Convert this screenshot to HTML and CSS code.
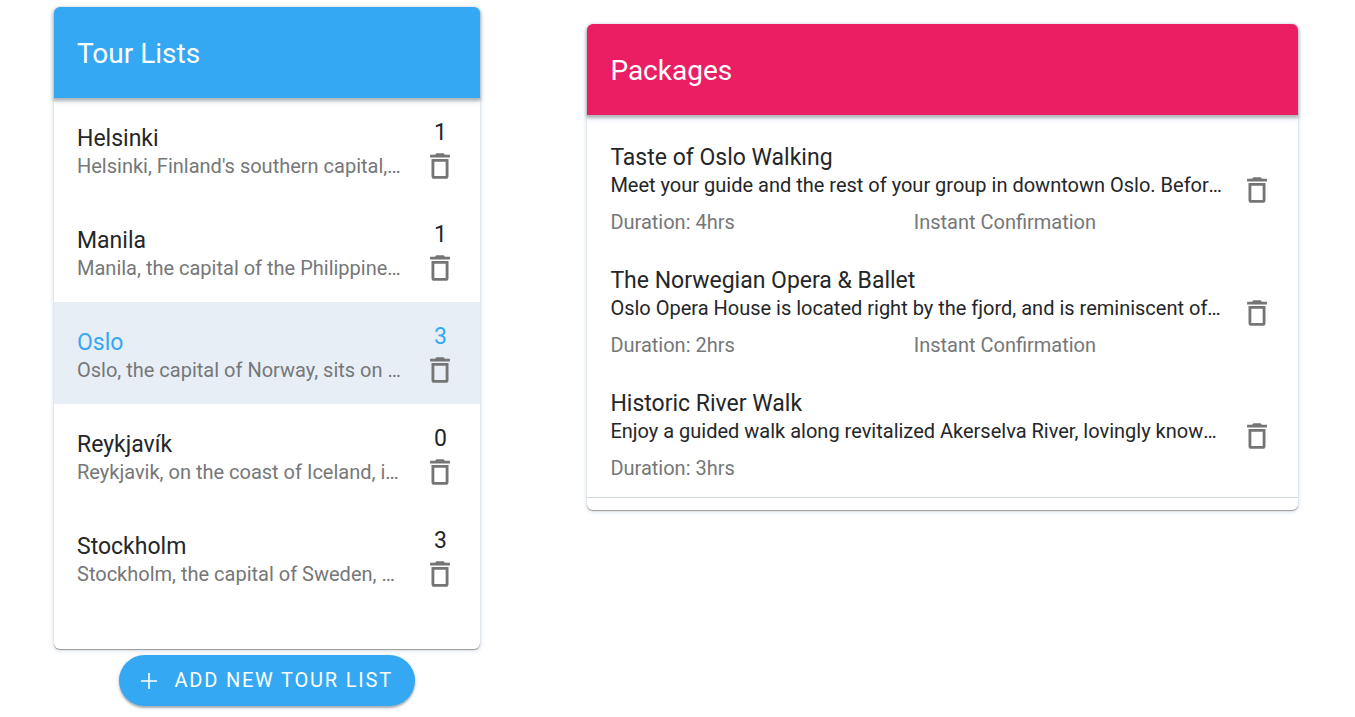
FILE: index.html
```html
<!DOCTYPE html>
<html lang="en">
<head>
<meta charset="utf-8">
<meta name="viewport" content="width=device-width, initial-scale=1">
<title>Tour Lists</title>
<link rel="stylesheet" href="styles.css">
</head>
<body>
<svg class="sprite" aria-hidden="true">
  <symbol id="trash" viewBox="0 0 24 24"><path d="M6 19a2 2 0 0 0 2 2h8a2 2 0 0 0 2-2V7H6v12M8 9h8v10H8V9m7.500-5-1-1h-5l-1 1H5v2h14V4h-3.500z"/></symbol>
</svg>
<main class="page">
  <section class="column">
    <div class="card lists">
      <header class="card-header blue"><h1 class="heading">Tour Lists</h1></header>
      <ul class="list">
        <li class="tour">
          <div class="text"><h2 class="title">Helsinki</h2><p class="line muted">Helsinki, Finland's southern capital, sits on a peninsula</p></div>
          <div class="action"><span class="count">1</span><button class="delete" type="button" aria-label="Delete Helsinki"><svg class="icon"><use href="#trash"/></svg></button></div>
        </li>
        <li class="tour">
          <div class="text"><h2 class="title">Manila</h2><p class="line muted">Manila, the capital of the Philippines, is a bayside city</p></div>
          <div class="action"><span class="count">1</span><button class="delete" type="button" aria-label="Delete Manila"><svg class="icon"><use href="#trash"/></svg></button></div>
        </li>
        <li class="tour active">
          <div class="text"><h2 class="title">Oslo</h2><p class="line muted">Oslo, the capital of Norway, sits on the southern coast</p></div>
          <div class="action"><span class="count">3</span><button class="delete" type="button" aria-label="Delete Oslo"><svg class="icon"><use href="#trash"/></svg></button></div>
        </li>
        <li class="tour">
          <div class="text"><h2 class="title">Reykjavík</h2><p class="line muted">Reykjavik, on the coast of Iceland, is the capital</p></div>
          <div class="action"><span class="count">0</span><button class="delete" type="button" aria-label="Delete Reykjavík"><svg class="icon"><use href="#trash"/></svg></button></div>
        </li>
        <li class="tour">
          <div class="text"><h2 class="title">Stockholm</h2><p class="line muted">Stockholm, the capital of Sweden, encompasses 14 islands</p></div>
          <div class="action"><span class="count">3</span><button class="delete" type="button" aria-label="Delete Stockholm"><svg class="icon"><use href="#trash"/></svg></button></div>
        </li>
      </ul>
    </div>
    <button class="add" type="button">
      <svg class="plus" viewBox="0 0 16 16" aria-hidden="true"><path d="M7.200 0h1.600v7.200H16v1.600H8.800V16H7.200V8.800H0V7.200h7.200z"/></svg>
      Add new tour list
    </button>
  </section>
  <section class="card packages">
    <header class="card-header pink"><h1 class="heading">Packages</h1></header>
    <ul class="list package-list">
      <li class="package">
        <div class="text"><h2 class="title">Taste of Oslo Walking</h2><p class="line">Meet your guide and the rest of your group in downtown Oslo. Before you set off, get an introduction</p><div class="facts muted"><span>Duration: 4hrs</span><span>Instant Confirmation</span></div></div>
        <button class="delete" type="button" aria-label="Delete Taste of Oslo Walking"><svg class="icon"><use href="#trash"/></svg></button>
      </li>
      <li class="package">
        <div class="text"><h2 class="title">The Norwegian Opera &amp; Ballet</h2><p class="line">Oslo Opera House is located right by the fjord, and is reminiscent of a glacier floating in the water</p><div class="facts muted"><span>Duration: 2hrs</span><span>Instant Confirmation</span></div></div>
        <button class="delete" type="button" aria-label="Delete The Norwegian Opera &amp; Ballet"><svg class="icon"><use href="#trash"/></svg></button>
      </li>
      <li class="package">
        <div class="text"><h2 class="title">Historic River Walk</h2><p class="line">Enjoy a guided walk along revitalized Akerselva River, lovingly known as the green lung of the city</p><div class="facts muted"><span>Duration: 3hrs</span></div></div>
        <button class="delete" type="button" aria-label="Delete Historic River Walk"><svg class="icon"><use href="#trash"/></svg></button>
      </li>
    </ul>
  </section>
</main>
</body>
</html>
```
FILE: styles.css
```css
* { box-sizing: border-box; }
body { margin: 0; background: #fff; color: #242629; font-family: Roboto, "Liberation Sans", sans-serif; }
h1, h2, p, ul { margin: 0; padding: 0; font-weight: 400; }
button { border: 0; padding: 0; font: inherit; cursor: pointer; }
.sprite { display: none; }

.page {
  display: grid;
  grid-template-columns: 3fr 5fr;
  gap: 107px;
  align-items: start;
  padding: 7px 57px 10px 54px;
}
.column { display: flex; flex-direction: column; align-items: center; gap: 6px; min-width: 0; }
.card { width: 100%; min-width: 0; border-radius: 6px; background: #fff; box-shadow: 0 1px 1px #999, 0 1px 4px 1px #dce5ef; }
.packages { margin-top: 17px; }
.card-header { padding: 27px 23px 24px; border-radius: 6px 6px 0 0; color: #fff; box-shadow: 0 2px 3px 1px #b4b7ba, 0 4px 7px #e4ebf4; }
.blue { background: #34a8f3; }
.pink { background: #eb1e63; }
.heading { font-size: 28px; line-height: 40px; }

.list { list-style: none; }
.lists .list { padding-bottom: 41px; }
.tour { display: flex; align-items: center; gap: 18px; padding: 18px 22px 17px 23px; }
.tour .text { padding-top: 4px; }
.active { background: #e8eef6; }
.active .title, .active .count { color: #34a8f3; }
.text { flex: 1; min-width: 0; }
.title { padding-top: 2px; font-size: 23px; line-height: 26px; }
.line { overflow: hidden; font-size: 20px; line-height: 28px; text-overflow: ellipsis; white-space: nowrap; }
.muted { color: #757779; }
.action { display: flex; flex-direction: column; align-items: center; width: 36px; }
.count { font-size: 23px; line-height: 33px; }
.delete { display: flex; background: none; color: #757575; }
.icon { width: 34px; height: 34px; fill: currentColor; }

.package-list { padding: 12px 0; }
.package { display: flex; align-items: center; gap: 17px; padding: 16px 24px 14px 23px; }
.package:last-child { padding-bottom: 15px; border-bottom: 1px solid #d0d7df; }
.facts { display: grid; grid-template-columns: 1fr 1fr; padding: 9px 6px 0 0; font-size: 20px; line-height: 28px; }

.add {
  display: flex;
  align-items: center;
  gap: 17px;
  padding: 11px 22px;
  border-radius: 26px;
  background: #34a8f3;
  color: #fff;
  font-size: 20px;
  line-height: 29px;
  font-weight: 400;
  letter-spacing: 0.09em;
  text-transform: uppercase;
  box-shadow: 0 2px 2px #aab0b6, 0 1px 5px #dce5ef;
}
.plus { width: 16px; height: 16px; fill: currentColor; }
```
